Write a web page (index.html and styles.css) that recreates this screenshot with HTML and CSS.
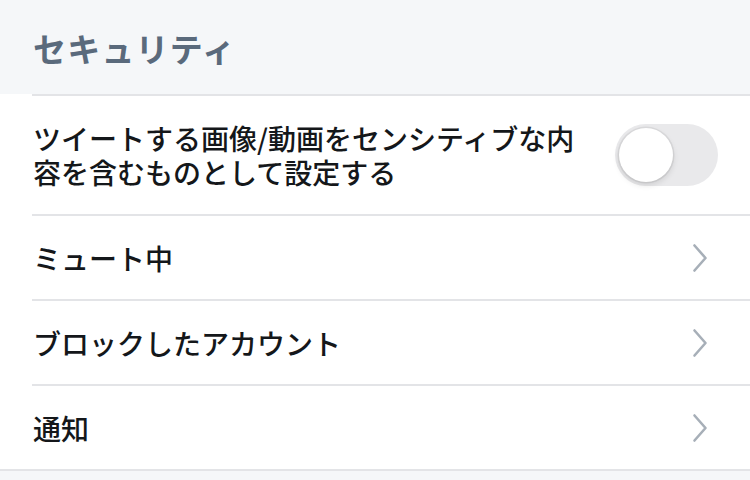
FILE: index.html
```html
<!DOCTYPE html>
<html lang="ja">
<head>
<meta charset="utf-8">
<link rel="stylesheet" href="styles.css">
</head>
<body>
<div class="page">
  <header class="section-header">セキュリティ</header>
  <ul class="list">
    <li class="row">
      <div class="row-inner row-toggle">
        <span class="label">ツイートする画像/動画をセンシティブな内容を含むものとして設定する</span>
        <span class="toggle"><span class="knob"></span></span>
      </div>
    </li>
    <li class="row">
      <div class="row-inner">
        <span class="label">ミュート中</span>
        <svg class="chev" width="16" height="30" viewBox="0 0 16 30"><path d="M2.5 2.5 L13.5 15 L2.5 27.5" fill="none" stroke="#a7afb8" stroke-width="2.6" stroke-linecap="round" stroke-linejoin="round"/></svg>
      </div>
    </li>
    <li class="row">
      <div class="row-inner">
        <span class="label">ブロックしたアカウント</span>
        <svg class="chev" width="16" height="30" viewBox="0 0 16 30"><path d="M2.5 2.5 L13.5 15 L2.5 27.5" fill="none" stroke="#a7afb8" stroke-width="2.6" stroke-linecap="round" stroke-linejoin="round"/></svg>
      </div>
    </li>
    <li class="row">
      <div class="row-inner">
        <span class="label">通知</span>
        <svg class="chev" width="16" height="30" viewBox="0 0 16 30"><path d="M2.5 2.5 L13.5 15 L2.5 27.5" fill="none" stroke="#a7afb8" stroke-width="2.6" stroke-linecap="round" stroke-linejoin="round"/></svg>
      </div>
    </li>
  </ul>
</div>
</body>
</html>
```
FILE: styles.css
```css
html, body {
  margin: 0;
  padding: 0;
  background: #f5f7f9;
}
body {
  font-family: "Noto Sans CJK JP", "Noto Sans", sans-serif;
  color: #14171a;
}
.page {
  width: 750px;
  height: 480px;
  overflow: hidden;
  background: #f5f7f9;
}
.section-header {
  height: 94px;
  box-sizing: border-box;
  display: flex;
  align-items: center;
  padding-left: 33px;
  padding-top: 2px;
  font-size: 33px;
  font-weight: 700;
  color: #5a6a7c;
  letter-spacing: 1.2px;
}
.list {
  list-style: none;
  margin: 0;
  padding: 0;
  background: #ffffff;
  border-bottom: 2px solid #e3e4e7;
}
.row {
  padding-left: 32px;
}
.row-inner {
  display: flex;
  align-items: center;
  justify-content: space-between;
  border-top: 2px solid #e3e4e7;
  height: 83px;
  padding-left: 1px;
  padding-right: 42px;
}
.row-toggle {
  height: 118px;
  padding-right: 32px;
  gap: 30px;
}
.label {
  font-size: 28px;
  font-weight: 500;
  line-height: 34px;
}
.row-toggle .label {
  flex: 1;
}
.toggle {
  flex: none;
  width: 103px;
  height: 62px;
  border-radius: 31px;
  background: #e9e9eb;
  box-sizing: border-box;
  display: flex;
  align-items: center;
  padding-left: 4px;
}
.knob {
  width: 54px;
  height: 54px;
  border-radius: 50%;
  background: #ffffff;
  box-shadow: 0 0 0 1.5px rgba(0,0,0,0.06), 0 3px 6px rgba(0,0,0,0.12);
}
.chev {
  flex: none;
  display: block;
}
```
